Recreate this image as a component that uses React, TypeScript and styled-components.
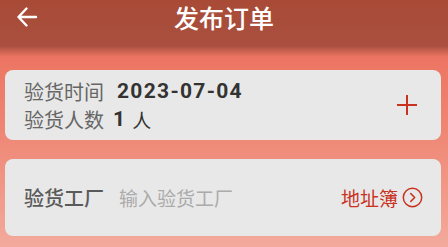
import styled, { createGlobalStyle } from "styled-components";

const GlobalStyle = createGlobalStyle`
  html, body {
    margin: 0;
    padding: 0;
  }
  body {
    font-family: "Noto Sans CJK SC", "Noto Sans", sans-serif;
    background: #f3ab9d;
  }
`;

const Page = styled.div`
  width: 448px;
  height: 247px;
  overflow: hidden;
  background: linear-gradient(
    180deg,
    #a84a36 0px,
    #aa5040 46px,
    #ec7562 57px,
    #ef8674 130px,
    #f3aa9c 247px
  );
`;

const Header = styled.div`
  height: 34px;
  display: flex;
  align-items: center;
  justify-content: center;
  position: relative;
`;

const Back = styled.div`
  position: absolute;
  left: 16px;
  top: 6px;
  width: 22px;
  height: 22px;
  display: flex;
`;

const Title = styled.div`
  color: #fff;
  font-size: 25px;
  font-weight: 500;
  line-height: 34px;
`;

const Body = styled.div`
  display: flex;
  flex-direction: column;
  gap: 19px;
  padding: 36px 7px 0 5px;
`;

const Card = styled.div<{ $h: number }>`
  background: #e8e8e8;
  border-radius: 8px;
  height: ${(p) => p.$h}px;
  box-sizing: border-box;
  display: flex;
  align-items: center;
  padding: 0 0 0 19px;
`;

const Lines = styled.div`
  flex: 1;
  display: flex;
  flex-direction: column;
`;

const Line = styled.div`
  display: flex;
  align-items: center;
  height: 28px;
`;

const Label = styled.span<{ $w: number }>`
  color: #666;
  font-size: 20px;
  width: ${(p) => p.$w}px;
  flex-shrink: 0;
`;

const Value = styled.span`
  color: #333;
  font-family: "Roboto", "Noto Sans CJK SC", sans-serif;
  font-size: 21px;
  font-weight: 700;
  letter-spacing: 1.3px;
`;

const Unit = styled.span`
  color: #333;
  font-size: 19px;
  margin-left: 6px;
`;

const FieldLabel = styled.span`
  color: #5a5a5a;
  font-size: 20px;
  font-weight: 500;
  width: 95px;
  flex-shrink: 0;
`;

const Placeholder = styled.span`
  flex: 1;
  color: #ababab;
  font-size: 19px;
`;

const Link = styled.div`
  display: flex;
  align-items: center;
  gap: 4px;
  color: #c8321e;
  font-size: 19px;
  margin-right: 18px;
`;

const Plus = styled.div`
  width: 22px;
  height: 22px;
  margin-right: 23px;
  display: flex;
`;

export default function App() {
  return (
    <Page>
      <GlobalStyle />
      <Header>
        <Back>
          <svg width="22" height="22" viewBox="0 0 22 22" fill="none" stroke="#fff" strokeWidth="2.4" strokeLinecap="round" strokeLinejoin="round">
            <path d="M20 11H2.5M10.5 2.5L2.5 11l8 8.5" />
          </svg>
        </Back>
        <Title>发布订单</Title>
      </Header>
      <Body>
        <Card $h={70}>
          <Lines>
            <Line>
              <Label $w={93}>验货时间</Label>
              <Value>2023-07-04</Value>
            </Line>
            <Line>
              <Label $w={89}>验货人数</Label>
              <Value>1</Value>
              <Unit>人</Unit>
            </Line>
          </Lines>
          <Plus>
            <svg width="22" height="22" viewBox="0 0 22 22" stroke="#c8321e" strokeWidth="2">
              <path d="M11 1v20M1 11h20" />
            </svg>
          </Plus>
        </Card>
        <Card $h={77}>
          <FieldLabel>验货工厂</FieldLabel>
          <Placeholder>输入验货工厂</Placeholder>
          <Link>
            地址簿
            <svg width="21" height="21" viewBox="0 0 21 21" fill="none" stroke="#c8321e" strokeWidth="1.5" strokeLinecap="round" strokeLinejoin="round">
              <circle cx="10.5" cy="10.5" r="9.2" />
              <path d="M8.8 6.6l3.9 3.9-3.9 3.9" />
            </svg>
          </Link>
        </Card>
      </Body>
    </Page>
  );
}
